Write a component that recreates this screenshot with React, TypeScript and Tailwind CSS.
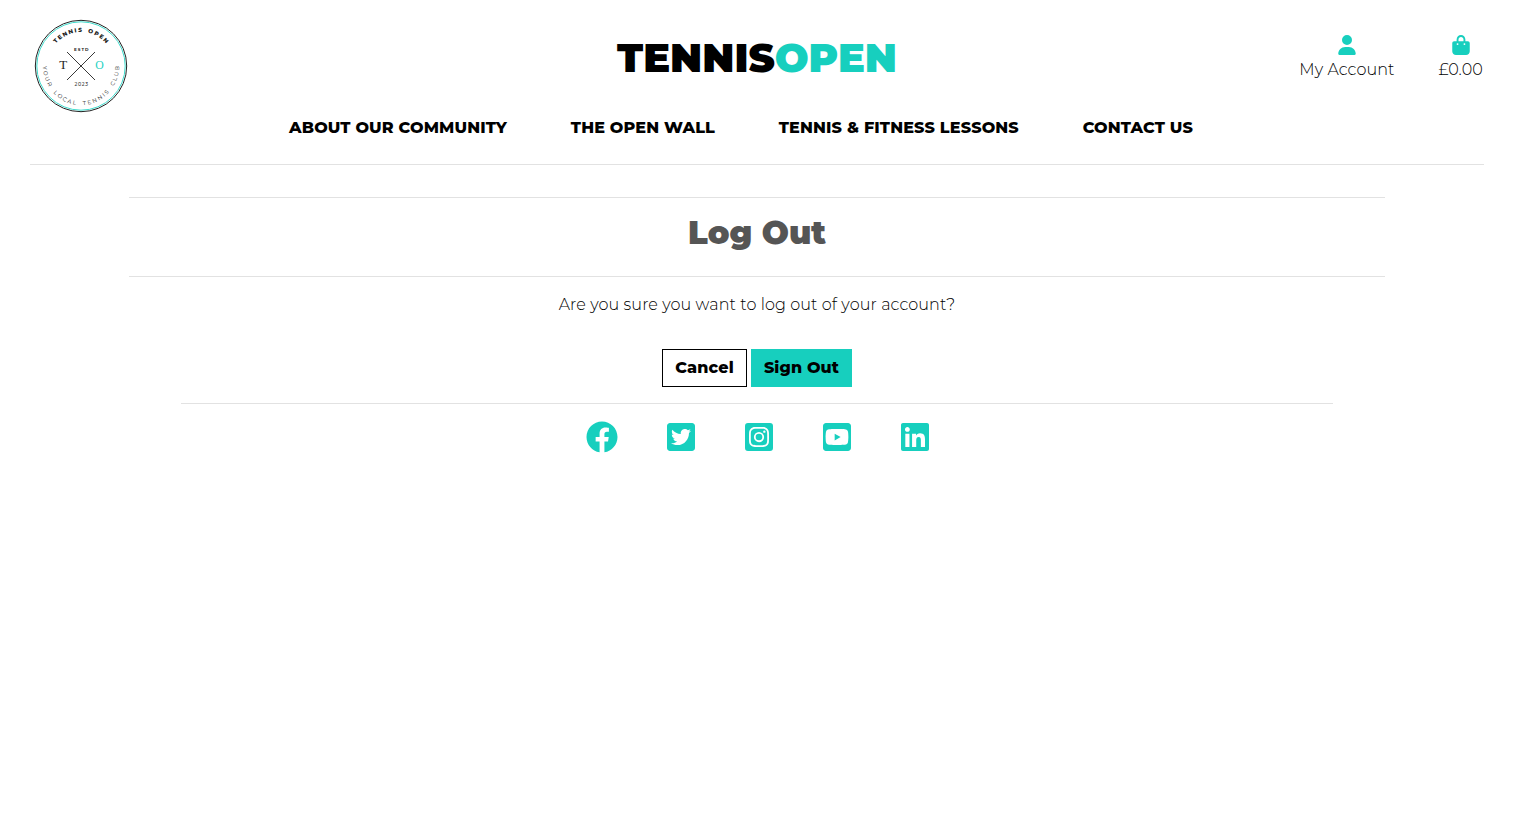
import { FaUser, FaBagShopping } from "react-icons/fa6";
import { FaFacebook, FaTwitterSquare, FaInstagramSquare, FaYoutubeSquare, FaLinkedin } from "react-icons/fa";

function Logo() {
  return (
    <svg viewBox="0 0 94 94" className="size-[94px]" fontFamily="Montserrat, Lato, sans-serif">
      <defs>
        <path id="top-arc" d="M13.5 47.5a33.5 34.5 0 0 1 67 0" />
        <path id="bottom-arc" d="M8.7 45.5a38.3 40.8 0 0 0 76.6 0" />
      </defs>
      <circle cx="47" cy="47" r="45.7" fill="none" stroke="#222" strokeWidth="1" />
      <circle cx="47" cy="47" r="44.2" fill="none" stroke="#40dccd" strokeWidth="1" />
      <path d="M33 33l28 28M61 33l-28 28" stroke="#222" strokeWidth="0.9" />
      <text fontSize="5.8" fontWeight="800" fill="#222" className="[word-spacing:1.5px]">
        <textPath href="#top-arc" startOffset="50%" textAnchor="middle" textLength="57">TENNIS OPEN</textPath>
      </text>
      <text fontSize="5.6" fill="#222" className="[word-spacing:2.5px]">
        <textPath href="#bottom-arc" startOffset="50%" textAnchor="middle" textLength="120.5">YOUR LOCAL TENNIS CLUB</textPath>
      </text>
      <text x="47.2" y="31.6" fontSize="4.2" fontWeight="700" textAnchor="middle" textLength="14.5" fill="#222">ESTD</text>
      <text x="47.2" y="66.6" fontSize="4.8" fontWeight="500" textAnchor="middle" textLength="13.5" fill="#333">2023</text>
      <text x="29.2" y="50.4" fontSize="13" fontFamily="Liberation Serif, serif" textAnchor="middle" fill="#222">T</text>
      <text x="65.6" y="50.4" fontSize="13" textLength="8.5" lengthAdjust="spacingAndGlyphs" fontFamily="Liberation Serif, serif" textAnchor="middle" fill="#1fd2c2">O</text>
    </svg>
  );
}

export default function App() {
  return (
    <div className="w-[1514px] bg-white font-['Montserrat','Inter',sans-serif] text-base leading-6 text-black">
      <header className="mx-[30px] h-[165px] border-b border-[#e2e2e2]">
        <div className="flex h-[116px] justify-between">
          <div className="w-[280px] pl-1 pt-[19px]">
            <Logo />
          </div>
          <h1 className="pt-[34px] text-[40px] font-black leading-[48px] whitespace-nowrap">
            TENNIS<span className="text-[#17cfbe]">OPEN</span>
          </h1>
          <div className="flex w-[280px] justify-end gap-[44px] pr-px pt-[35px] font-light tracking-[0.1px]">
            <a className="flex flex-col items-center whitespace-nowrap">
              <FaUser className="size-5 text-[#17cfbe]" />
              <span className="mt-[3px]">My Account</span>
            </a>
            <a className="flex flex-col items-center whitespace-nowrap">
              <FaBagShopping className="size-5 text-[#17cfbe]" />
              <span className="mt-[3px]">£0.00</span>
            </a>
          </div>
        </div>
        <nav className="ml-[259px] flex gap-[63.8px] font-extrabold tracking-[0.14px] whitespace-nowrap">
          <a>ABOUT OUR COMMUNITY</a>
          <a>THE OPEN WALL</a>
          <a>TENNIS &amp; FITNESS LESSONS</a>
          <a>CONTACT US</a>
        </nav>
      </header>
      <main className="mt-8">
        <div className="mx-[129px] flex h-20 justify-center border-y border-[#e2e2e2] pt-[15px]">
          <h2 className="text-[32px] font-black leading-10 text-[#555]">Log Out</h2>
        </div>
        <p className="mt-4 text-center font-light tracking-[0.11px]">
          Are you sure you want to log out of your account?
        </p>
        <div className="mt-8 flex justify-center gap-1 font-extrabold tracking-[0.13px] whitespace-nowrap">
          <button className="h-[38px] w-[85px] border border-black">Cancel</button>
          <button className="h-[38px] w-[101px] bg-[#17cfbe]">Sign Out</button>
        </div>
      </main>
      <footer className="mx-[181px] mt-4 flex justify-center gap-[46px] border-t border-[#e2e2e2] pt-[17px] pl-[3px] text-[32px] text-[#17cfbe]">
        <FaFacebook className="mr-[1.6px]" />
        <FaTwitterSquare />
        <FaInstagramSquare />
        <FaYoutubeSquare />
        <FaLinkedin />
      </footer>
    </div>
  );
}
